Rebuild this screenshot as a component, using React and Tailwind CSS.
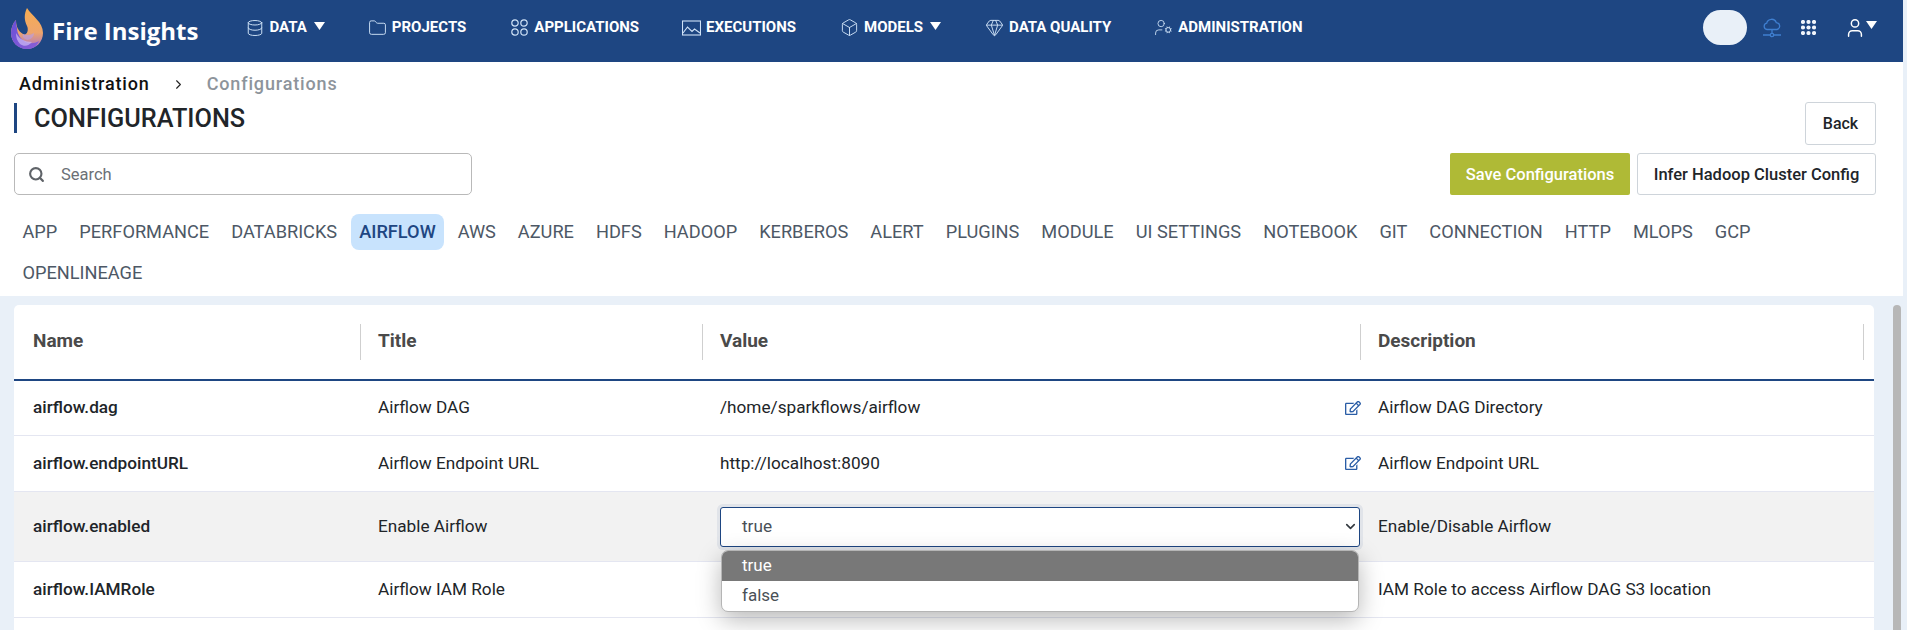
import React from "react";
import { Database, Folder, Box, Gem, UserCog, User, Search, ChevronDown, ChevronRight } from "lucide-react";
import { FaRegEdit } from "react-icons/fa";

const Caret = ({ className = "" }) => (
  <svg width="11" height="8" viewBox="0 0 11 8" className={className}><path d="M0 0h11L5.5 8z" fill="#fff" /></svg>
);

const Apps = () => (
  <svg width="17" height="17" viewBox="0 0 17 17" fill="none" stroke="#cfe2f7" strokeWidth="1.2">
    <circle cx="4" cy="4" r="3.2" /><circle cx="13" cy="4" r="3.2" /><circle cx="4" cy="13" r="3.2" /><circle cx="13" cy="13" r="3.2" />
  </svg>
);

const Exec = () => (
  <svg width="19" height="16" viewBox="0 0 19 16" fill="none" stroke="#cfe2f7" strokeWidth="1.1">
    <rect x="0.5" y="1" width="18" height="14" />
    <path d="M1 13l4.5-6 4.5 4.5 2.5-2.5 5.5 4" />
  </svg>
);

const Logo = () => (
  <svg width="34" height="42" viewBox="0 0 34 42">
    <defs>
      <linearGradient id="lg1" x1="0.5" y1="0" x2="0.5" y2="1">
        <stop offset="0" stopColor="#f7ad52" /><stop offset="0.6" stopColor="#eea56c" /><stop offset="1" stopColor="#a670cf" />
      </linearGradient>
      <linearGradient id="lg2" x1="0" y1="0" x2="1" y2="1">
        <stop offset="0" stopColor="#6a4fd8" /><stop offset="1" stopColor="#8a5fd6" />
      </linearGradient>
    </defs>
    <path d="M17 0C22 8 33 14 33 25C33 34 26 41 17 41C8 41 1 34 1 25C1 20 3 15 6 12C6 18 8 23 13 26C17 28 19 22 17 18C14 12 14 6 17 0Z" fill="url(#lg1)" />
    <path d="M6 12C3 15 1 20 1 25C1 34 8 41 17 41C23 41 27 38 29 33C24 36 18 36 14 33C10 30 7 25 7 20C6 17 6 14 6 12Z" fill="url(#lg2)" />
    <path d="M6 25C9 31 15 34 22 34C19 38 14 39 10 36C7 33 6 29 6 25Z" fill="#c9b6f3" opacity="0.75" />
    <path d="M13 26C17 28 21 27 24 25C24 30 19 33 15 31C13 30 12 28 13 26Z" fill="#b79fe9" opacity="0.6" />
  </svg>
);

const CloudNet = () => (
  <svg width="20" height="20" viewBox="0 0 20 20" fill="none" stroke="#3f7fd0" strokeWidth="1.3">
    <path d="M5 11.5a3.2 3.2 0 0 1-.3-6.3A5 5 0 0 1 14.3 4.6a3.5 3.5 0 0 1 .7 6.9z" />
    <path d="M10 11.5v3.5M1 17h7M12 17h7" />
    <circle cx="10" cy="17" r="1.7" />
  </svg>
);

const Dots = () => (
  <svg width="15" height="15" viewBox="0 0 15 15" fill="#f1f5fb">
    {[2, 7.5, 13].flatMap((y) => [2, 7.5, 13].map((x) => <circle key={x + "-" + y} cx={x} cy={y} r="2.1" />))}
  </svg>
);

const NavItem = ({ icon, label, caret, className = "" }) => (
  <div className={`flex items-center ${className}`}>
    <span className="flex w-[19px] justify-center text-[#cfe2f7]">{icon}</span>
    <span className="ml-[5px] text-[15px] font-bold text-white">{label}</span>
    {caret && <Caret className="ml-[7px] mb-[4px]" />}
  </div>
);

const tabs = ["APP", "PERFORMANCE", "DATABRICKS", "AIRFLOW", "AWS", "AZURE", "HDFS", "HADOOP", "KERBEROS", "ALERT", "PLUGINS", "MODULE", "UI SETTINGS", "NOTEBOOK", "GIT", "CONNECTION", "HTTP", "MLOPS", "GCP", "OPENLINEAGE"];

const Edit = () => <FaRegEdit className="-mr-[1px] text-[#2a5da6]" size={16} />;

const Row = ({ h, name, title, value, desc, edit, active }) => (
  <div className={`grid grid-cols-[346px_342px_658px_1fr] items-center border-b border-[#e4e6f1] text-[17.2px] text-[#212529] ${h} ${active ? "bg-[#f2f2f2]" : ""}`}>
    <div className="pl-[19px] font-medium">{name}</div>
    <div className="pl-[18px]">{title}</div>
    <div className="flex items-center justify-between pl-[18px]">
      {value}
      {edit && <Edit />}
    </div>
    <div className="pl-[18px]">{desc}</div>
  </div>
);

const Head = ({ children, last }) => (
  <div className={`flex h-[36px] items-center pb-[2px] pl-[17px] text-[19px] font-bold text-[#4a4a4a] ${last ? "border-r border-[#cfcfcf] mr-[10px]" : ""}`}>{children}</div>
);

export default function App() {
  return (
    <div className="relative h-[630px] w-full overflow-hidden bg-[#e9f0f8] font-['Roboto',sans-serif]">
      <div className="mr-[4px]">
        <nav className="flex h-[62px] items-center justify-between bg-[#1e4682] pb-[7px]">
          <div className="flex items-center">
            <div className="ml-[10px] mt-[3px]"><Logo /></div>
            <span className="ml-[8px] mt-[6px] font-['Open_Sans',sans-serif] text-[24px] font-bold text-white">Fire Insights</span>
            <NavItem className="ml-[47px]" icon={<Database size={18} strokeWidth={1.3} />} label="DATA" caret />
            <NavItem className="ml-[43px]" icon={<Folder size={20} strokeWidth={1.2} />} label="PROJECTS" />
            <NavItem className="ml-[44px]" icon={<Apps />} label="APPLICATIONS" />
            <NavItem className="ml-[43px]" icon={<Exec />} label="EXECUTIONS" />
            <NavItem className="ml-[44px]" icon={<Box size={19} strokeWidth={1.2} />} label="MODELS" caret />
            <NavItem className="ml-[44px]" icon={<Gem size={19} strokeWidth={1.2} />} label="DATA QUALITY" />
            <NavItem className="ml-[43px]" icon={<UserCog size={19} strokeWidth={1.1} />} label="ADMINISTRATION" />
          </div>
          <div className="flex items-center">
            <div className="h-[35px] w-[44px] rounded-full bg-[#e9f0f8]" />
            <div className="ml-[15px]"><CloudNet /></div>
            <div className="ml-[19px]"><Dots /></div>
            <div className="ml-[28px] mr-[26px] flex items-center">
              <User size={22} strokeWidth={1.6} className="text-white" />
              <Caret className="mb-[6px]" />
            </div>
          </div>
        </nav>

        <div className="h-[234px] bg-white">
          <div className="flex items-center pl-[19px] pt-[12px] text-[18px] font-medium leading-[20px] tracking-[0.85px]">
            <span className="text-[#111]">Administration</span>
            <ChevronRight size={15} className="ml-[21px] text-[#222]" strokeWidth={1.8} />
            <span className="ml-[21px] text-[#8d949b]">Configurations</span>
          </div>
          <div className="flex justify-between pl-[14px] pr-[27px]">
            <div className="mt-[9px] h-[30px] border-l-[3px] border-[#1e4682] pl-[17px] text-[25.3px] font-medium leading-[32px] text-[#212529]">CONFIGURATIONS</div>
            <button className="mt-[8px] h-[43px] w-[71px] rounded-[3px] border border-[#ced4da] bg-white text-[16px] font-medium text-[#212529]">Back</button>
          </div>
          <div className="mt-[8px] flex justify-between pl-[14px] pr-[27px]">
            <div className="flex h-[42px] w-[458px] items-center rounded-[5px] border border-[#b9b9b9] pl-[13px] text-[16.5px] text-[#6b7076]">
              <Search size={17} strokeWidth={3} className="text-[#5f6368]" />
              <span className="ml-[16px] mt-[2px]">Search</span>
            </div>
            <div className="flex gap-[7px]">
              <button className="h-[42px] w-[180px] rounded-[2px] bg-[#afba36] pt-[2px] text-[16.5px] font-medium text-white">Save Configurations</button>
              <button className="h-[42px] w-[239px] rounded-[3px] border border-[#ced4da] bg-white pt-[2px] text-[16.5px] font-medium text-[#212529]">Infer Hadoop Cluster Config</button>
            </div>
          </div>
          <div className="mt-[19px] flex flex-wrap gap-x-[5px] gap-y-[5px] pl-[14px] pr-[120px] text-[18.2px] leading-[36px] text-[#4d5866]">
            {tabs.map((t) => (
              <span key={t} className={`h-[36px] rounded-[8px] px-[8.5px] ${t === "AIRFLOW" ? "bg-[#c8e3fd] font-medium text-[#1e4682]" : ""}`}>{t}</span>
            ))}
          </div>
        </div>

        <div className="px-[14px] pr-[29px] pt-[9px]">
          <div className="rounded-t-[5px] bg-white">
            <div className="grid h-[76px] grid-cols-[346px_342px_658px_1fr] items-center border-b-2 border-[#1e4682]">
              <Head><span className="ml-[2px]">Name</span></Head>
              <div className="border-l border-[#cfcfcf]"><Head>Title</Head></div>
              <div className="border-l border-[#cfcfcf]"><Head>Value</Head></div>
              <div className="border-l border-[#cfcfcf]"><Head last>Description</Head></div>
            </div>
            <Row h="h-[55px]" name="airflow.dag" title="Airflow DAG" value="/home/sparkflows/airflow" desc="Airflow DAG Directory" edit />
            <Row h="h-[56px]" name="airflow.endpointURL" title="Airflow Endpoint URL" value="http://localhost:8090" desc="Airflow Endpoint URL" edit />
            <Row
              h="h-[70px]"
              active
              name="airflow.enabled"
              title="Enable Airflow"
              value={
                <div className="flex h-[40px] w-[640px] items-center justify-between rounded-[3px] border border-[#1e4682] bg-white pl-[21px] pr-[1px] text-[#495057] shadow-[0_0_0_3px_rgba(30,70,130,0.08)]">
                  true
                  <ChevronDown size={15} strokeWidth={2.6} className="text-[#343a40]" />
                </div>
              }
              desc="Enable/Disable Airflow"
            />
            <Row h="h-[56px]" name="airflow.IAMRole" title="Airflow IAM Role" value="" desc="IAM Role to access Airflow DAG S3 location" />
            <div className="h-[40px]" />
          </div>
        </div>
      </div>

      <div className="absolute left-[721px] top-[550px] w-[638px] overflow-hidden rounded-[7px] border border-[#b5b5b5] bg-white text-[17px] text-[#495057] shadow-[0_8px_24px_rgba(0,0,0,0.28)]">
        <div className="flex h-[30px] items-center bg-[#787878] pl-[20px] text-white">true</div>
        <div className="flex h-[30px] items-center pl-[20px]">false</div>
      </div>

      <div className="absolute right-[6px] top-[305px] h-[340px] w-[8px] rounded-full bg-[#b7b7b7]" />
    </div>
  );
}
